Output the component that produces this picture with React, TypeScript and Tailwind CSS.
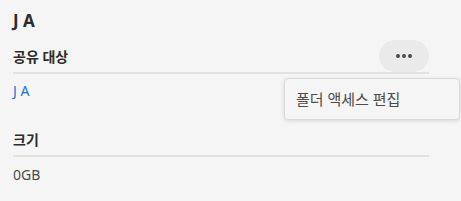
import React from 'react';

const FONT = { fontFamily: '"Noto Sans", "Noto Sans CJK KR", sans-serif' };

function MoreButton() {
  return (
    <button className="flex h-8 w-[50px] items-center justify-center gap-[2px] rounded-full bg-[#eaeaea]">
      <span className="h-1 w-1 rounded-full bg-[#4b4b4b]" />
      <span className="h-1 w-1 rounded-full bg-[#4b4b4b]" />
      <span className="h-1 w-1 rounded-full bg-[#4b4b4b]" />
    </button>
  );
}

export default function App() {
  return (
    <div className="relative h-[201px] w-[461px] overflow-hidden bg-[#f5f5f5]" style={FONT}>
      <div className="w-[429px] pl-[13px] pt-[9px]">
        <h2 className="text-[17px] font-bold leading-6 text-[#2c2c2c]">J A</h2>

        <div className="mt-[8px] flex h-[33px] items-center justify-between border-b-2 border-[#e1e1e1] pb-px">
          <span className="text-[14px] font-semibold text-[#2c2c2c]">공유 대상</span>
          <MoreButton />
        </div>
        <div className="mt-[7px] text-[14px] leading-5 text-[#1473e6]">J A</div>

        <div className="mt-[23px] flex h-[33px] items-center border-b-2 border-[#e1e1e1] pb-px">
          <span className="text-[14px] font-semibold text-[#2c2c2c]">크기</span>
        </div>
        <div className="mt-[8px] text-[14px] leading-5 text-[#4b4b4b]">0GB</div>
      </div>

      <div className="absolute left-[284px] top-[78px] flex h-[42px] w-[176px] items-center rounded-[4px] border border-[#dadada] bg-[#f5f5f5] pl-[11px] shadow-[0_1px_4px_rgba(0,0,0,0.12)]">
        <span className="text-[15px] text-[#4b4b4b]">폴더 액세스 편집</span>
      </div>
    </div>
  );
}
